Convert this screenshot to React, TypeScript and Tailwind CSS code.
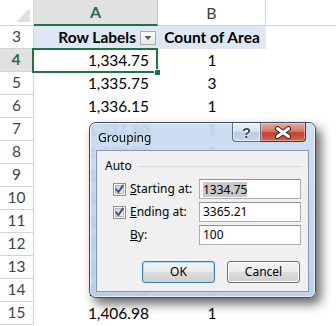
import React from "react";

const rows = [
  { n: 4, a: "1,334.75", b: "1" },
  { n: 5, a: "1,335.75", b: "3" },
  { n: 6, a: "1,336.15", b: "1" },
  { n: 7, a: "1,337.50", b: "1" },
  { n: 8, a: "1,340.00", b: "1" },
  { n: 9, a: "1,342.25", b: "2" },
  { n: 10, a: "1,345.60", b: "1" },
  { n: 11, a: "1,350.10", b: "1" },
  { n: 12, a: "1,362.40", b: "1" },
  { n: 13, a: "1,375.00", b: "1" },
  { n: 14, a: "1,390.55", b: "1" },
  { n: 15, a: "1,406.98", b: "1" },
];

function CheckBox() {
  return (
    <svg width="13" height="13" viewBox="0 0 13 13" className="shrink-0">
      <defs>
        <linearGradient id="cbg" x1="0" y1="0" x2="1" y2="1">
          <stop offset="0" stopColor="#cbcfd5" />
          <stop offset="1" stopColor="#f7f7f7" />
        </linearGradient>
      </defs>
      <rect x="0.5" y="0.5" width="12" height="12" fill="#fdfdfd" stroke="#8e8f8f" />
      <rect x="2.5" y="2.5" width="8" height="8" fill="url(#cbg)" stroke="#b2b6bc" />
      <path d="M3.2 6.3 L5.4 9.2 L9.8 2.6" stroke="#3c4f8c" strokeWidth="1.9" fill="none" strokeLinecap="round" strokeLinejoin="round" />
    </svg>
  );
}

function TextBox({ children }: { children: React.ReactNode }) {
  return (
    <div className="w-[102px] h-[20px] mr-[7px] shrink-0 bg-white border border-[#abadb3] border-t-[#8e9399] flex items-center pl-[3px] text-black leading-none">
      {children}
    </div>
  );
}

export default function App() {
  return (
    <div className="relative w-[336px] h-[326px] overflow-hidden bg-white font-['Lato',sans-serif] text-[15.5px] text-black">
      {/* column header row */}
      <div className="flex h-[26px]">
        <div className="relative w-[34px] shrink-0 border-r border-b border-[#d4d4d4] bg-white">
          <svg className="absolute left-0 top-0" width="33" height="25">
            <polygon points="30,8 30,22 16,22" fill="#dfdfdf" />
          </svg>
        </div>
        <div className="w-[124px] shrink-0 flex items-center justify-center bg-[#e1e1e1] border-b-2 border-b-[#217346] border-r border-r-[#c6c6c6] font-bold text-[#217346] text-[16px]">
          A
        </div>
        <div className="w-[108px] shrink-0 flex items-center justify-center bg-white border-b border-r border-[#d4d4d4] text-[#444] text-[16px]">
          B
        </div>
        <div className="flex-1 border-b border-[#d4d4d4]" />
      </div>

      {/* row 3 */}
      <div className="flex h-[23px]">
        <div className="w-[34px] shrink-0 border-r border-b border-[#d4d4d4] flex items-center justify-center text-[#444]">
          3
        </div>
        <div className="w-[124px] shrink-0 bg-[#dde8f4] flex items-center justify-end font-bold">
          <span>Row Labels</span>
          <div className="ml-[4px] mr-[2px] w-[16px] h-[14px] border border-[#acacac] bg-[linear-gradient(#fbfbfb,#e6e6e6)] flex items-center justify-center">
            <svg width="8" height="4" viewBox="0 0 8 4">
              <polygon points="0.5,0 7.5,0 4,4" fill="#5a5a5a" />
            </svg>
          </div>
        </div>
        <div className="w-[108px] shrink-0 bg-[#dde8f4] flex items-center justify-center font-bold">
          Count of Area
        </div>
        <div className="flex-1" />
      </div>

      {rows.map((r) => {
        const sel = r.n === 4;
        return (
          <div key={r.n} className="flex h-[23px]">
            <div
              className={
                sel
                  ? "w-[34px] shrink-0 border-r-2 border-b border-r-[#217346] border-b-[#d4d4d4] bg-[#e1e1e1] flex items-center justify-center text-[#217346] font-bold"
                  : "w-[34px] shrink-0 border-r border-b border-[#d4d4d4] flex items-center justify-center text-[#444]"
              }
            >
              {r.n}
            </div>
            <div className="relative w-[124px] shrink-0 flex items-center justify-end pr-[9px]">
              {r.a}
              {sel && (
                <>
                  <div className="absolute left-[-2px] top-[-1px] w-[126px] h-[25px] border-2 border-[#217346]" />
                  <div className="absolute left-[120px] top-[20px] w-[7px] h-[7px] bg-[#217346] border border-white" />
                </>
              )}
            </div>
            <div className="w-[108px] shrink-0 flex items-center justify-center">{r.b}</div>
            <div className="flex-1" />
          </div>
        );
      })}

      {/* Grouping dialog */}
      <div className="absolute left-[89px] top-[122px] w-[227px] h-[176px] rounded-[7px] border border-[#3d4f63] bg-[linear-gradient(180deg,rgba(200,219,240,0.9),rgba(186,208,233,0.94))] backdrop-blur-[1.5px] shadow-[5px_6px_11px_rgba(0,0,0,0.6)] flex flex-col font-['Noto_Sans',sans-serif] text-[12px] text-black">
        <div className="absolute inset-0 rounded-[6px] border border-white/60 pointer-events-none" />
        {/* title bar */}
        <div className="relative h-[27px] flex items-start shrink-0">
          <span className="ml-[8px] mt-[7px] leading-[16px]">Grouping</span>
          <div className="ml-auto mr-[9px] flex">
            <div className="w-[29px] h-[19px] rounded-bl-[4px] border border-t-0 border-[#5f6f82] bg-[linear-gradient(180deg,#e9f0f8_0%,#d5e1ee_45%,#bccce0_55%,#c9d8ea_100%)] flex items-center justify-center shadow-[inset_0_0_0_1px_rgba(255,255,255,0.6)]">
              <span className="font-['Liberation_Sans',sans-serif] font-bold text-[15px] leading-none text-[#3b4756] [text-shadow:0_0_2px_#fff,0_0_1px_#fff]">?</span>
            </div>
            <div className="w-[45px] h-[19px] rounded-br-[4px] border border-t-0 border-l-0 border-[#5a2c2c] bg-[linear-gradient(180deg,#e9a99c_0%,#d7786a_45%,#c2432f_55%,#d0614f_100%)] flex items-center justify-center shadow-[inset_0_0_0_1px_rgba(255,220,210,0.5)]">
              <svg width="18" height="13" viewBox="0 0 18 13">
                <path d="M3.5 2.5 L14.5 10.5 M14.5 2.5 L3.5 10.5" stroke="#3a2323" strokeWidth="5" strokeLinecap="round" />
                <path d="M3.5 2.5 L14.5 10.5 M14.5 2.5 L3.5 10.5" stroke="#ffffff" strokeWidth="3" strokeLinecap="round" />
              </svg>
            </div>
          </div>
        </div>
        {/* client area */}
        <div className="mx-[6px] mb-[5px] flex-1 border border-[#8399b3] bg-[#f0f0f0] flex flex-col">
          <div className="mt-[8px] ml-[8px] mr-[6px] h-[14px] flex items-center">
            <span>Auto</span>
            <div className="ml-[6px] flex-1 h-px bg-[#d5dfe5]" />
          </div>
          <div className="mt-[6px] flex flex-col gap-[3px]">
            <div className="h-[20px] flex items-center pl-[16px]">
              <CheckBox />
              <span className="ml-[4px] flex-1">
                <span className="underline">S</span>tarting at:
              </span>
              <TextBox>
                <span className="bg-[#c9c9c9] leading-[15px]">1334.75</span>
              </TextBox>
            </div>
            <div className="h-[20px] flex items-center pl-[16px]">
              <CheckBox />
              <span className="ml-[4px] flex-1">
                <span className="underline">E</span>nding at:
              </span>
              <TextBox>3365.21</TextBox>
            </div>
            <div className="h-[20px] flex items-center pl-[33px]">
              <span className="flex-1">
                <span className="underline">B</span>y:
              </span>
              <TextBox>100</TextBox>
            </div>
          </div>
          <div className="mt-[16px] flex justify-end gap-[12px] pr-[8px]">
            <div className="w-[73px] h-[22px] rounded-[3px] border border-[#3c7fb1] shadow-[inset_0_0_0_1px_#a6dcf6] bg-[linear-gradient(180deg,#f2f2f2_0%,#ebebeb_50%,#dddddd_50%,#cfcfcf_100%)] flex items-center justify-center">
              OK
            </div>
            <div className="w-[73px] h-[22px] rounded-[3px] border border-[#707070] shadow-[inset_0_0_0_1px_#fbfbfb] bg-[linear-gradient(180deg,#f2f2f2_0%,#ebebeb_50%,#dddddd_50%,#cfcfcf_100%)] flex items-center justify-center">
              Cancel
            </div>
          </div>
        </div>
      </div>
    </div>
  );
}
